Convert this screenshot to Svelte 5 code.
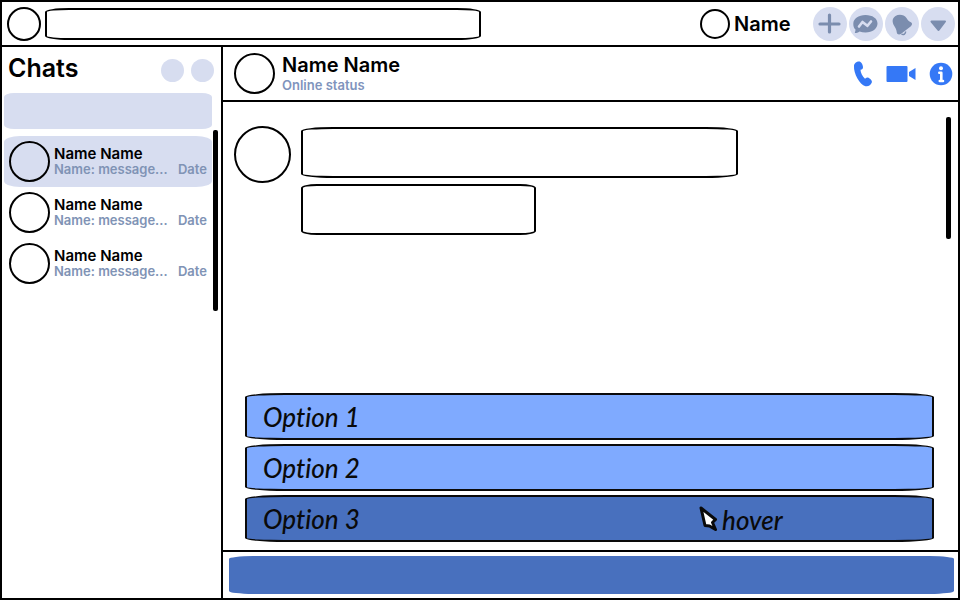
<script>
  const chats = [
    { name: 'Name Name', message: 'Name: message...', date: 'Date' },
    { name: 'Name Name', message: 'Name: message...', date: 'Date' },
    { name: 'Name Name', message: 'Name: message...', date: 'Date' }
  ];
  const options = ['Option 1', 'Option 2', 'Option 3'];
  let selected = $state(0);
  let hovered = $state(2);
</script>

<div class="app">
  <header class="topbar">
    <a class="logo" href="#home" aria-label="Home"></a>
    <input class="search" type="search" aria-label="Search" />
    <a class="account" href="#profile"><span class="face"></span>Name</a>
    <nav class="tools">
      <button aria-label="Create">
        <svg viewBox="0 0 34 34"><path d="M16.500 8V25M7 17H26" fill="none" stroke="currentColor" stroke-width="3.200" stroke-linecap="round" /></svg>
      </button>
      <button aria-label="Messenger">
        <svg viewBox="0 0 34 34">
          <path d="M16.500 8C23.500 8 28.500 11.500 28.500 16.500S23.500 25.500 16.500 25.500C14.300 25.500 12.300 25.100 10.600 24.500C9 25.700 7.500 26 5.800 26L6.600 22.700C4.800 21 4.300 19 4.300 16.700C4.300 11.500 9.500 8 16.500 8Z" fill="currentColor" />
          <path d="M10 19.500L13.500 15L18.300 18.800L22 14.500" fill="none" stroke="#d7ddf0" stroke-width="2.600" stroke-linecap="round" stroke-linejoin="round" />
        </svg>
      </button>
      <button aria-label="Notifications">
        <svg viewBox="0 0 34 34">
          <path d="M10.500 9C14 6.800 19 7.500 21.500 11C22.500 13 23.500 14 26.300 15.500C27.800 16.500 26.800 18.500 25.600 19.500C22.500 21.500 19.500 24.500 16.500 26.500C14.800 27.800 12.300 28 11.800 25.500C11.500 22.500 10.500 21 9 18.500C7 15 7 11.300 10.500 9Z" fill="currentColor" />
          <path d="M16.500 27C18.500 28.500 21 26.500 20.500 24.500" fill="none" stroke="currentColor" stroke-width="1.500" />
        </svg>
      </button>
      <button aria-label="Menu">
        <svg viewBox="0 0 34 34"><path d="M10.500 14.500H24L17.600 23Z" fill="currentColor" stroke="currentColor" stroke-width="2" stroke-linejoin="round" /></svg>
      </button>
    </nav>
  </header>

  <div class="body">
    <aside class="sidebar">
      <div class="side-head">
        <h1>Chats</h1>
        <button aria-label="Chat options"></button>
        <button aria-label="New chat"></button>
      </div>
      <div class="side-body">
        <div class="side-list">
          <input class="filter" type="search" aria-label="Search chats" />
          <ul>
            {#each chats as chat, i}
              <li>
                <button class="chat" class:active={selected === i} onclick={() => (selected = i)}>
                  <span class="avatar"></span>
                  <span class="info">
                    <span class="who">{chat.name}</span>
                    <span class="meta"><span>{chat.message}</span><span>{chat.date}</span></span>
                  </span>
                </button>
              </li>
            {/each}
          </ul>
        </div>
        <div class="thumb side-thumb"></div>
      </div>
    </aside>

    <main class="conversation">
      <header class="contact">
        <span class="avatar"></span>
        <div class="contact-text">
          <h2>Name Name</h2>
          <p>Online status</p>
        </div>
        <div class="calls">
          <button aria-label="Call">
            <svg width="20" height="26" viewBox="0 0 20 26"><path d="M1 5C1 2.500 3.500 .5 6 .5C8 .5 9.800 3 10 6C10.100 7.800 9.300 8.300 7.500 8.800C7.500 11.500 9.500 15.500 12 17.800C13.300 16.800 14.500 16.300 15.500 16.800C17.500 17.800 19.500 20 18.800 21.500C17.800 24 15.500 25.800 12.500 25.200C6.500 23.500 .5 12.500 1 5Z" fill="currentColor" /></svg>
          </button>
          <button aria-label="Video call">
            <svg width="30" height="18" viewBox="0 0 30 18"><rect x=".5" y="1" width="21" height="16" rx="1" fill="currentColor" /><path d="M23 7L29.500 3V15L23 11Z" fill="currentColor" /></svg>
          </button>
          <button aria-label="Details">
            <svg width="24" height="24" viewBox="0 0 24 24"><circle cx="12" cy="12" r="11.300" fill="currentColor" /><circle cx="12" cy="6.300" r="2" fill="#fff" /><path d="M10.300 10.800H12.300V19M10.800 19H14" fill="none" stroke="#fff" stroke-width="2.600" stroke-linecap="round" stroke-linejoin="round" /></svg>
          </button>
        </div>
      </header>

      <section class="thread">
        <span class="speaker"></span>
        <div class="bubbles">
          <div class="bubble long"></div>
          <div class="bubble short"></div>
        </div>
        <div class="thumb thread-thumb"></div>
      </section>

      <div class="options">
        {#each options as option, i}
          <button class="option" class:hovered={hovered === i} onmouseenter={() => (hovered = i)}>
            {option}
            {#if hovered === i}
              <span class="pointer">
                <svg width="20" height="26" viewBox="0 0 20 26"><path d="M2 2L16.500 13.500L13.500 16.500L16.500 23.500L10.500 20L6 19.500Z" fill="#fff" stroke="#0a0a0a" stroke-width="3" stroke-linejoin="round" /></svg>
                hover
              </span>
            {/if}
          </button>
        {/each}
      </div>

      <footer class="composer">
        <input type="text" aria-label="Message" />
      </footer>
    </main>
  </div>
</div>

<style>
  :global(body) {
    margin: 0;
    background: #fff;
  }
  .app,
  .app * {
    box-sizing: border-box;
  }
  .app {
    display: flex;
    flex-direction: column;
    min-height: 100vh;
    border: 2px solid #000;
    color: #000;
    font-family: Inter, 'Liberation Sans', sans-serif;
    font-weight: 600;
  }
  button,
  input {
    margin: 0;
    padding: 0;
    border: 0;
    background: none;
    color: inherit;
    font: inherit;
    outline: none;
    appearance: none;
  }
  button {
    cursor: pointer;
  }
  h1,
  h2,
  p,
  ul {
    margin: 0;
    padding: 0;
    list-style: none;
  }
  svg {
    display: block;
  }

  .topbar {
    display: flex;
    align-items: center;
    height: 45px;
    padding: 0 3px 0 5px;
    border-bottom: 2px solid #000;
  }
  .logo {
    flex: none;
    width: 34px;
    height: 34px;
    border: 2px solid #000;
    border-radius: 50%;
  }
  .search {
    flex: 0 1 436px;
    min-width: 0;
    height: 32px;
    margin: 0 auto 0 4px;
    padding: 0 12px;
    border: 2px solid #000;
    border-radius: 24px / 4px;
  }
  .account {
    display: flex;
    flex: none;
    align-items: center;
    gap: 4px;
    width: 113px;
    color: inherit;
    font-size: 20px;
    line-height: 24px;
    text-decoration: none;
  }
  .face {
    width: 30px;
    height: 30px;
    border: 2px solid #000;
    border-radius: 50%;
  }
  .tools {
    display: flex;
    flex: none;
    gap: 2px;
  }
  .tools button {
    width: 34px;
    height: 34px;
    border-radius: 50%;
    background: #d7ddf0;
    color: #7b8dae;
  }

  .body {
    display: flex;
    flex: 1;
  }
  .sidebar {
    flex: none;
    width: 221px;
    padding-left: 2px;
    border-right: 2px solid #000;
  }
  .side-head {
    display: flex;
    align-items: center;
    gap: 7px;
    height: 46px;
    padding: 0 7px 0 4px;
  }
  h1 {
    flex: 1;
    padding-bottom: 4px;
    font-size: 25px;
    font-weight: 600;
    line-height: 28px;
  }
  .side-head button {
    width: 23px;
    height: 23px;
    border-radius: 50%;
    background: #d7ddf0;
  }
  .side-body {
    display: flex;
    gap: 1px;
  }
  .side-list {
    width: 208px;
  }
  .filter {
    display: block;
    width: 100%;
    height: 36px;
    margin-bottom: 7px;
    padding: 0 12px;
    border-radius: 10px / 4px;
    background: #d7ddf0;
  }
  .chat {
    display: flex;
    align-items: center;
    gap: 4px;
    width: 100%;
    height: 51px;
    padding: 0 5px;
    border-radius: 16px / 6px;
    text-align: left;
  }
  .chat.active {
    background: #d7ddf0;
  }
  .avatar {
    flex: none;
    width: 41px;
    height: 41px;
    border: 2px solid #000;
    border-radius: 50%;
  }
  .info {
    flex: 1;
  }
  .who {
    display: block;
    font-size: 15px;
    line-height: 16px;
  }
  .meta {
    display: flex;
    justify-content: space-between;
    color: #8093b5;
    font-size: 13px;
    line-height: 15px;
    white-space: nowrap;
  }
  .thumb {
    flex: none;
    width: 5px;
    border-radius: 2px;
    background: #000;
  }
  .side-thumb {
    height: 181px;
    margin-top: 37px;
  }

  .conversation {
    display: flex;
    flex: 1;
    flex-direction: column;
    min-width: 0;
  }
  .contact {
    display: flex;
    align-items: center;
    gap: 7px;
    height: 55px;
    padding: 0 5px 0 11px;
    border-bottom: 2px solid #000;
  }
  .contact-text {
    flex: 1;
  }
  h2 {
    font-size: 20px;
    font-weight: 600;
    line-height: 22px;
  }
  p {
    color: #7f94bd;
    font-size: 13px;
    line-height: 18px;
  }
  .calls {
    display: flex;
    align-items: center;
    gap: 13px;
    color: #3578f6;
  }
  .thread {
    display: flex;
    flex: 1;
    align-items: flex-start;
    padding: 15px 7px 12px 11px;
  }
  .speaker {
    flex: none;
    width: 57px;
    height: 57px;
    margin: 9px 10px 0 0;
    border: 2px solid #000;
    border-radius: 50%;
  }
  .bubbles {
    display: flex;
    flex: 1;
    flex-direction: column;
    gap: 6px;
    padding-top: 10px;
  }
  .bubble {
    height: 51px;
    border: 2px solid #000;
  }
  .long {
    max-width: 437px;
    border-radius: 32px / 4px;
  }
  .short {
    max-width: 235px;
    border-radius: 16px / 4px;
  }
  .thread-thumb {
    height: 122px;
  }

  .options {
    display: flex;
    flex-direction: column;
    gap: 4px;
    padding: 0 24px 8px 22px;
  }
  .option {
    position: relative;
    height: 47px;
    padding: 0 16px;
    border: 2px solid #0a0a0a;
    border-radius: 40px / 4px;
    background: #7faaff;
    color: #0a0a0a;
    font-family: Lato, 'Liberation Sans', sans-serif;
    font-size: 26px;
    font-style: italic;
    font-variant-ligatures: none;
    font-weight: 500;
    line-height: 28px;
    text-align: left;
  }
  .option.hovered {
    background: #4870be;
  }
  .pointer {
    position: absolute;
    top: 9px;
    left: 66%;
    display: flex;
    gap: 3px;
  }
  .composer {
    padding: 4px 4px 4px 6px;
    border-top: 2px solid #000;
  }
  .composer input {
    display: block;
    width: 100%;
    height: 38px;
    padding: 0 16px;
    border-radius: 24px / 3px;
    background: #4870be;
  }
</style>
